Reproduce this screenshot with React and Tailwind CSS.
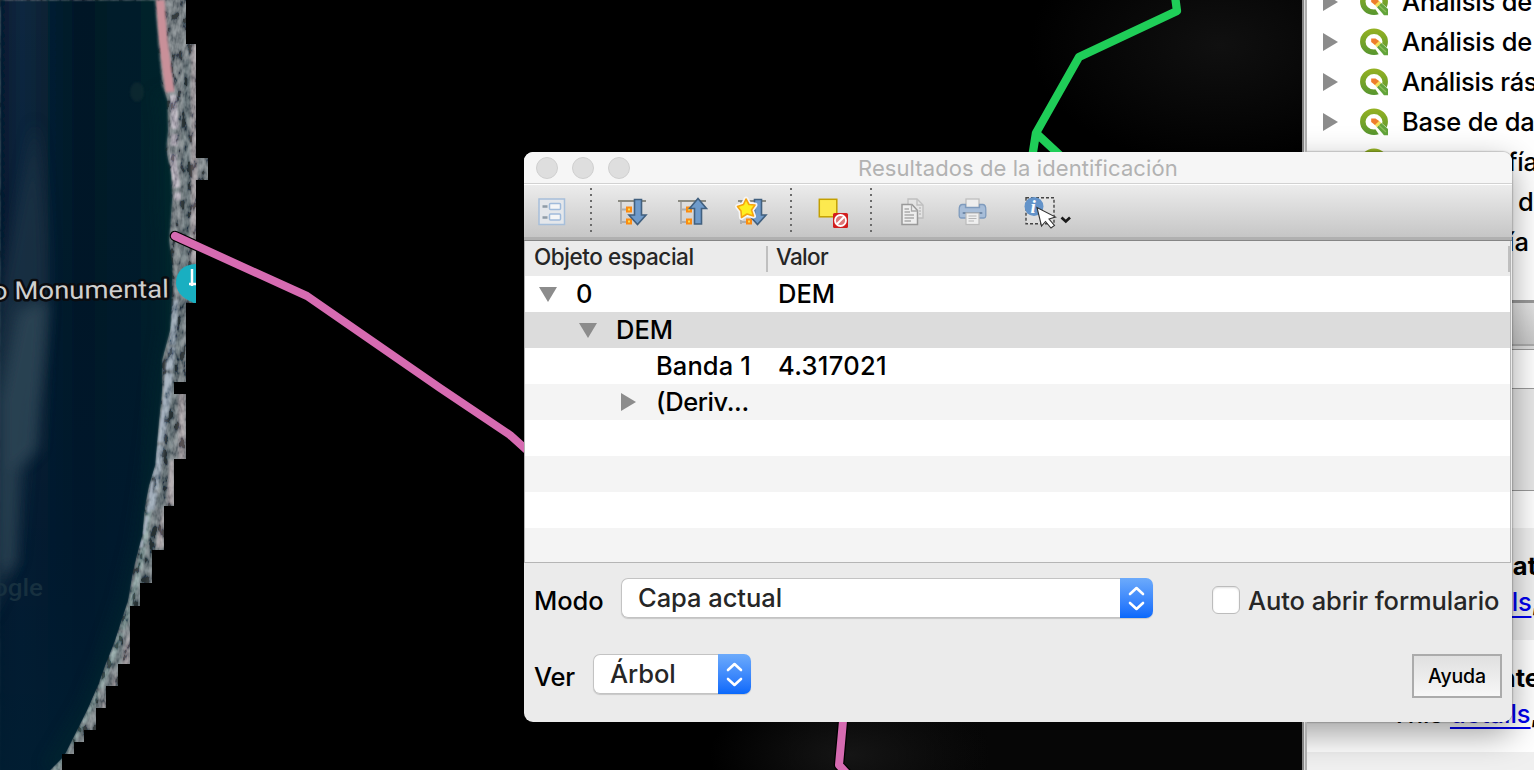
import React from "react";

const LAND =
  "M0 0H186V44H196V158H208V180H196V303H186V382H174V394H186V459H174V506H164V550H152V583H140V606H130V664H118V686H106V708H96V730H84V742H74V754H62V770H0Z";
const COAST =
  "M0 0H155L158 40L162 85L167 100L168 130L166 150L171 175L172 200L169 240L172 265L172 290L170 330L162 360L162 390L158 430L155 465L149 485L145 505L142 535L133 570L128 600L115 640L104 668L98 685L87 710L76 732L64 756L48 772H0Z";

function MapCanvas() {
  return (
    <svg className="block h-full w-full" viewBox="0 0 1302 770" preserveAspectRatio="none">
      <defs>
        <clipPath id="land"><path d={LAND} /></clipPath>
        <clipPath id="water"><path d={COAST} /></clipPath>
        <linearGradient id="sea" x1="0" x2="1" y1="0" y2="0">
          <stop offset="0" stopColor="#06192c" />
          <stop offset=".04" stopColor="#071e36" />
          <stop offset=".13" stopColor="#0a2940" />
          <stop offset=".3" stopColor="#061f31" />
          <stop offset=".45" stopColor="#001827" />
          <stop offset=".75" stopColor="#001d2a" />
          <stop offset="1" stopColor="#03262c" />
        </linearGradient>
        <linearGradient id="deep" x1="0" x2="0" y1="0" y2="1">
          <stop offset="0" stopColor="#001a2e" stopOpacity="0" />
          <stop offset=".4" stopColor="#00172c" stopOpacity=".35" />
          <stop offset=".7" stopColor="#00182e" stopOpacity=".75" />
          <stop offset="1" stopColor="#001d31" stopOpacity=".95" />
        </linearGradient>
        <radialGradient id="glow"><stop offset="0" stopColor="#101010" /><stop offset="1" stopColor="#101010" stopOpacity="0" /></radialGradient>
        <radialGradient id="glow2"><stop offset="0" stopColor="#151515" /><stop offset="1" stopColor="#151515" stopOpacity="0" /></radialGradient>
        <linearGradient id="floor" x1="0" x2="1" y1="0" y2="0"><stop stopColor="#060606" stopOpacity="0" /><stop offset=".4" stopColor="#060606" /></linearGradient>
        <filter id="rough" x="0" y="0" width="100%" height="100%">
          <feTurbulence type="fractalNoise" baseFrequency=".16 .08" numOctaves="3" seed="9" />
          <feColorMatrix values="2.4 0 0 0 -.82  2.4 0 0 0 -.8  2.4 0 0 0 -.77  0 0 0 0 1" />
        </filter>
        <filter id="b1" x="-50%" y="-10%" width="200%" height="120%"><feGaussianBlur stdDeviation="1.1" /></filter>
        <filter id="b8" x="-100%" y="-30%" width="300%" height="160%"><feGaussianBlur stdDeviation="7" /></filter>
      </defs>
      <rect width="1302" height="770" fill="#000" />
      <ellipse cx="1220" cy="45" rx="190" ry="120" fill="url(#glow)" />
      <rect x="780" y="720" width="522" height="50" fill="url(#floor)" />
      <ellipse cx="850" cy="755" rx="140" ry="70" fill="url(#glow2)" />
      <g clipPath="url(#land)">
        <rect width="210" height="770" fill="#566063" />
        <path d="M194 44V300M182 392V460M171 460V505M160 508V548M126 625V665M113 668V686M102 690V708" fill="none" stroke="#94888b" strokeWidth="7" opacity=".85" filter="url(#b1)" />
        <path d="M187 60L186 130L187 205L184 250L180 330L174 380L170 440L163 490L152 545L138 600L125 635L112 675L96 710" fill="none" stroke="#2f4347" strokeWidth="7" opacity=".6" filter="url(#b1)" />
        <path d="M173 95L175 130L173 160L178 200" fill="none" stroke="#a89eac" strokeWidth="7" strokeDasharray="34 5 12 8" filter="url(#b1)" />
        <path d="M175 202V240" fill="none" stroke="#3b5c69" strokeWidth="8" filter="url(#b1)" />
        <path d="M175 300L172 350L167 400L162 435L157 475L151 510" fill="none" stroke="#76899a" strokeWidth="7" strokeDasharray="45 2 23 3" filter="url(#b1)" />
        <path d="M149 510L144 545L137 580L128 612L118 642L107 670L94 700L80 728L67 750L54 772" fill="none" stroke="#64817f" strokeWidth="6" strokeDasharray="35 2 23 3" filter="url(#b1)" />
        <rect width="210" height="770" filter="url(#rough)" opacity=".38" />
        <path d="M160 0L163 40L170 92" fill="none" stroke="#c99099" strokeWidth="9" filter="url(#b1)" />
        <path d="M168 362L165 400L160 435L153 475L149 507L140 550" fill="none" stroke="#aab6c3" strokeWidth="3.500" strokeDasharray="8 4 18 6" filter="url(#b1)" />
        <path d={COAST} fill="url(#sea)" filter="url(#b1)" />
        <g clipPath="url(#water)">
          <rect width="200" height="770" fill="url(#deep)" />
          <path d="M35 120Q62 300 32 405L18 560L-10 620V340Z" fill="#20374a" opacity=".6" filter="url(#b8)" />
          <path d="M18 310L48 300L38 450L16 470L14 565L0 575V400Z" fill="#2f4757" opacity=".8" filter="url(#b8)" />
          <path d="M163 90L168 130L167 200L170 240L170 330L160 390L152 465L141 540L126 600L106 660L86 710L50 770" fill="none" stroke="#032b2e" strokeWidth="18" opacity=".4" filter="url(#b8)" />
          <ellipse cx="137" cy="92" rx="7" ry="10" fill="#143035" opacity=".5" filter="url(#b1)" />
          <text x="-7" y="596" fontSize="24" fontWeight="500" fill="#17303f" fontFamily="Roboto, sans-serif" textLength="50" lengthAdjust="spacingAndGlyphs">ogle</text>
        </g>
        <path d="M176 283C176 271 184 264 197 264V304C187 301 176 294 176 283Z" fill="#19afc1" />
        <path d="M192 269V286M189 284H197" fill="none" stroke="#fff" strokeWidth="2.500" />
      </g>
      <text x="-8" y="299.500" fontSize="25" fontWeight="400" fontFamily="Roboto, sans-serif" fill="#cfcfce" stroke="#0a0c10" strokeWidth="5" paintOrder="stroke" strokeLinejoin="round" textLength="177" lengthAdjust="spacingAndGlyphs" transform="rotate(-.7 0 299)">o Monumental</text>
      <g fill="none" strokeLinecap="round" strokeLinejoin="round">
        <path d="M175 236L307 296L440 388L510 435L540 462" stroke="#000" strokeWidth="10.500" />
        <path d="M175 236L307 296L440 388L510 435L540 462" stroke="#d66bb1" strokeWidth="8" />
        <path d="M844 710L839 765L850 777" stroke="#000" strokeWidth="10.500" />
        <path d="M844 710L839 765L850 777" stroke="#d66bb1" strokeWidth="8" />
      </g>
      <path d="M1175 -4L1177 11L1079 57L1036 133L1032 158M1036 133L1065 160" fill="none" stroke="#1fce58" strokeWidth="8.300" strokeLinejoin="round" />
    </svg>
  );
}

function QgisIcon() {
  return (
    <svg className="h-7 w-7 shrink-0" viewBox="0 0 28 28">
      <defs>
        <linearGradient id="qg" gradientUnits="userSpaceOnUse" x1="0" x2="0" y1="0" y2="28"><stop stopColor="#97b222" /><stop offset="1" stopColor="#559530" /></linearGradient>
      </defs>
      <ellipse cx="14" cy="13.800" rx="11.200" ry="10.500" fill="none" stroke="url(#qg)" strokeWidth="5.500" />
      <path d="M12 16L20.500 14L29 21.500V29H20.500Z" fill="#fff" />
      <path d="M16.800 19L21 14.800L28 21V27.300H24Z" fill="#63a43b" />
      <path d="M18.500 17L26 24" fill="none" stroke="#8cbf5a" strokeWidth="1.200" />
      <path d="M14.500 16.500L18.500 12.500L21.200 14.900L17 19.300Z" fill="#f5e05c" />
      <path d="M11.200 10.500H15.500L19 12.900L14.900 17L11.200 14Z" fill="#ee7d2b" />
    </svg>
  );
}

function RightArrow() {
  return <svg className="h-[18px] w-[15px] shrink-0" viewBox="0 0 15 18"><path d="M0 0L15 9L0 18Z" fill="#8c8c8c" /></svg>;
}
function DownArrow() {
  return <svg className="h-[15px] w-[18px] shrink-0" viewBox="0 0 18 15"><path d="M0 0H18L9 15Z" fill="#8c8c8c" /></svg>;
}

const TOOLS = ["Análisis de", "Análisis de", "Análisis rás", "Base de da", "Cartografía"];

function ToolRow({ label, className = "", labelClass = "tracking-[-0.2px]" }) {
  return (
    <div className={"flex h-10 shrink-0 items-center " + className}>
      <RightArrow />
      <span className="ml-[22px] flex"><QgisIcon /></span>
      <span className={"ml-[14px] whitespace-nowrap text-[25.500px] " + labelClass}>{label}</span>
    </div>
  );
}

function SidePanel() {
  return (
    <aside className="flex h-full w-[232px] shrink-0 overflow-hidden bg-white">
      <div className="h-full w-[5px] shrink-0 border-x-2 border-l-[#858585] border-r-[#adadad] bg-[#dadada]" />
      <div className="flex min-w-0 grow flex-col overflow-hidden">
        <div className="flex h-[300px] shrink-0 flex-col overflow-hidden pl-4">
          <ToolRow label={TOOLS[0]} className="-mt-[18px]" />
          <ToolRow label={TOOLS[1]} />
          <ToolRow label={TOOLS[2]} labelClass="tracking-[-0.35px]" />
          <ToolRow label={TOOLS[3]} />
          <ToolRow label={TOOLS[4]} labelClass="tracking-[-0.2px]" />
          <div className="flex h-10 shrink-0 items-center pl-[195px] text-[25.500px]">de</div>
          <div className="flex h-10 shrink-0 items-center pl-[185px] text-[25.500px]">ía</div>
        </div>
        <div className="h-[46px] shrink-0 border-b-2 border-t-[3px] border-b-[#aaa] border-t-[#999] bg-gradient-to-b from-[#e4e4e4] to-[#c8c8c8]" />
        <div className="h-[4px] shrink-0 border-b border-[#999] bg-[#ddd]" />
        <div className="h-[38px] shrink-0 bg-white" />
        <div className="h-[103px] shrink-0 border-y border-[#999] bg-[#e8e8e8]" />
        <div className="h-[37px] shrink-0 bg-white" />
        <div className="flex h-28 shrink-0 flex-col items-end overflow-hidden bg-[#f0f0f0] pt-5 text-[25.500px] leading-9">
          <b className="-mr-[3px] h-9 font-bold">at</b>
          <span className="-mr-[5px] h-9 whitespace-nowrap tracking-[-0.2px]"><u className="text-[#0000ee] decoration-[1.500px] underline-offset-[5px]">details</u>,</span>
        </div>
        <div className="flex h-28 shrink-0 flex-col overflow-hidden bg-white pt-5 text-[25.500px] leading-9">
          <b className="-mr-[6px] h-9 self-end font-bold">nte</b>
          <span className="ml-[84px] h-9 whitespace-nowrap">This <u className="text-[#0000ee] decoration-[1.500px] underline-offset-[4px]">details</u>,</span>
        </div>
        <div className="grow bg-[#f0f0f0]" />
      </div>
    </aside>
  );
}

function Dots() {
  return (
    <svg className="h-[46px] w-[2px]" viewBox="0 0 2 46">
      <path d="M1 0V45" stroke="#6b6b6b" strokeWidth="2" strokeDasharray="2 4" />
    </svg>
  );
}

function Tree() {
  return (
    <g>
      <path d="M1 3H29" stroke="#8b8b83" strokeWidth="2" />
      <path d="M4 4V26M4 11.500H9M4 24H9" stroke="#adadad" strokeWidth="2" fill="none" />
      <path d="M10 9.500H14V13.500H10ZM10 21.500H14V25.500H10Z" stroke="#fb8b12" strokeWidth="2" fill="#fde14d" />
    </g>
  );
}
const DOWN = "M17.500 1.500H24.500V17H29L20.500 26.500L12 17H17.500Z";
const STAR = "M9 1L12 6.500L18 7L14.500 12L16.500 18L10 16L4.500 19.500L4 13L.5 8.500L6.500 6.500Z";

function Icon({ children }) {
  return <svg className="h-8 w-8 overflow-visible" viewBox="0 0 32 32">{children}</svg>;
}

function Toolbar() {
  return (
    <div className="flex h-[53px] shrink-0 items-start border-t border-white bg-gradient-to-b from-[#ececec] to-[#c6c6c6] pt-[3px]">
      <div className="flex w-[66px] pl-[13px] pt-[10px]">
        <Icon>
          <rect x="2" y="1" width="25.500" height="25.500" fill="#e4e7eb" stroke="#a7bfda" strokeWidth="1.500" />
          <path d="M5.500 8.500H10.500M5.500 19.500H10.500" stroke="#8f9ca8" strokeWidth="2.500" />
          <rect x="12.500" y="5.500" width="11" height="6" rx="1" fill="#f5f6f7" stroke="#a0bbdb" strokeWidth="1.500" />
          <rect x="12.500" y="16" width="11" height="6" rx="1" fill="#f5f6f7" stroke="#a0bbdb" strokeWidth="1.500" />
        </Icon>
      </div>
      <Dots />
      <div className="flex gap-7 pl-[25px] pt-[10px]">
        <Icon><Tree /><path d={DOWN} fill="#6f9bcb" stroke="#41607f" strokeWidth="1.600" /></Icon>
        <Icon><Tree /><path d="M17.500 26V10.500H12.500L21 .5L29.500 10.500H24.500V26Z" fill="#6f9bcb" stroke="#41607f" strokeWidth="1.600" /></Icon>
        <Icon>
          <Tree />
          <path d={DOWN} fill="#6f9bcb" stroke="#41607f" strokeWidth="1.600" />
          <path d={STAR} fill="#fff" stroke="#f5f5f5" strokeWidth="5" strokeLinejoin="round" />
          <path d={STAR} fill="#ffef20" stroke="#f5a410" strokeWidth="1.600" strokeLinejoin="round" />
        </Icon>
      </div>
      <div className="ml-[21px] flex"><Dots /></div>
      <div className="flex w-[78px] pl-[26px] pt-[10px]">
        <Icon>
          <rect x="1.300" y="1.300" width="17.500" height="17.500" fill="#fce94f" stroke="#c4a000" strokeWidth="1.500" />
          <rect x="15" y="15" width="15" height="15" rx="1.500" fill="#d21d1d" />
          <circle cx="22.500" cy="22.500" r="5.500" fill="#d77" stroke="#fff" strokeWidth="1.800" />
          <path d="M18.800 26.200L26.200 18.800" stroke="#fff" strokeWidth="2" />
        </Icon>
      </div>
      <Dots />
      <div className="flex gap-[27px] pl-[28px] pt-[10px]">
        <Icon>
          <g fill="#e6e6e6" stroke="#b8b8b8" strokeWidth="1.400" opacity=".8"><path d="M8 1H17L23 7V20H8Z" /><path d="M17 1V7H23M19 10H21M19 13H21M19 16H21" fill="none" /></g>
          <path d="M2 6.500H12L17.500 12.500V26.500H2Z" fill="#eee" stroke="#999" strokeWidth="1.500" />
          <path d="M11.500 6.500V13H17.500M4.500 11H9M4.500 14H10M4.500 17H14M4.500 20H14M4.500 23H11" fill="none" stroke="#aaa" strokeWidth="1.300" />
        </Icon>
        <Icon>
          <rect x="7" y="1" width="13" height="10" fill="#eee" stroke="#bbb" strokeWidth="1.200" />
          <path d="M3 6.500H6.500V9.500H20.500V6.500H24Q27 7 26.800 12V18Q26.500 20 25 20H2Q.5 20 .2 18V12Q0 7 3 6.500Z" fill="#a7bdd8" stroke="#7f9bbd" strokeWidth="1.300" />
          <path d="M4.500 15H22.500" stroke="#7089a8" strokeWidth="2" strokeLinecap="round" />
          <rect x="7" y="15" width="13" height="11.500" fill="#efefef" stroke="#bbb" strokeWidth="1.200" />
          <path d="M9.500 18H17.500M9.500 20.500H17.500M9.500 23H15" stroke="#b5b5b5" />
        </Icon>
      </div>
      <div className="flex pl-[33px] pt-[9px]">
        <svg className="h-8 w-12" viewBox="0 0 48 32">
          <rect x="2" y=".8" width="28" height="26" fill="#e5e5e5" fillOpacity=".6" stroke="#444" strokeWidth="1.400" strokeDasharray="3 2" />
          <circle cx="10" cy="9.500" r="9.500" fill="#6393c9" />
          <text x="6.500" y="15.500" fontSize="19" fontWeight="700" fontStyle="italic" fill="#fff" fontFamily="Liberation Serif, serif">i</text>
          <path d="M13 10.500L17.500 29L21.500 24.500L27 31L30.500 28.500L25 22L31.500 20Z" fill="#fff" stroke="#333" strokeWidth="1.100" />
          <path d="M37.500 20.500L41.800 24.500L46 20.500" fill="none" stroke="#1a1a1a" strokeWidth="2.700" />
        </svg>
      </div>
    </div>
  );
}

function Stepper() {
  return (
    <span className="flex h-10 w-[33px] shrink-0 items-center justify-center rounded-r-[7px] bg-gradient-to-b from-[#6caafb] to-[#0768fb]">
      <svg className="h-7 w-5" viewBox="0 0 20 28"><path d="M3 10L9.500 4L16 10M3 19L9.500 25L16 19" fill="none" stroke="#fff" strokeWidth="2.600" strokeLinecap="round" strokeLinejoin="round" /></svg>
    </span>
  );
}

function Select({ label, className }) {
  return (
    <div className={"flex h-10 rounded-[7px] shadow-[0_1px_1px_rgba(0,0,0,0.15)] " + className}>
      <div className="flex grow items-center rounded-l-[7px] border border-r-0 border-[#c3c3c3] bg-white pl-4 text-[25.500px] tracking-[-0.050px] text-[#262626]">{label}</div>
      <Stepper />
    </div>
  );
}

function Dialog() {
  return (
    <section className="absolute left-[524px] top-[152px] flex h-[570px] w-[988px] flex-col overflow-hidden rounded-[9px] bg-[#ebebeb]">
      <header className="flex h-8 shrink-0 items-center border-b border-[#d2d2d2] bg-[#f6f6f6] pl-3 pt-px">
        <div className="flex gap-[14px]">
          <i className="h-[22px] w-[22px] rounded-full border border-[#cfcfcf] bg-[#dedede]" />
          <i className="h-[22px] w-[22px] rounded-full border border-[#cfcfcf] bg-[#dedede]" />
          <i className="h-[22px] w-[22px] rounded-full border border-[#cfcfcf] bg-[#dedede]" />
        </div>
        <h1 className="ml-[228px] whitespace-nowrap text-[22px] font-normal tracking-[0.080px] text-[#b2b2b2]">Resultados de la identificación</h1>
      </header>
      <Toolbar />
      <div className="h-[4px] shrink-0 border-b border-[#858585] bg-[#b0b0b0]" />
      <div className="mr-px flex h-[322px] shrink-0 flex-col border border-t-0 border-[#b5b5b5] bg-white text-[25.500px]">
        <div className="flex h-[35px] shrink-0 items-center bg-[#ebebeb] pl-[9px] text-[22.500px] text-[#262626]">
          <span className="w-[232px] pb-[3px] tracking-[-0.450px]">Objeto espacial</span>
          <span className="h-[26px] w-[2px] bg-[#bfbfbf]" />
          <span className="ml-2 grow pb-[3px] tracking-[-0.700px]">Valor</span>
          <span className="h-[26px] w-[2px] bg-[#bfbfbf]" />
        </div>
        <div className="flex h-9 shrink-0 items-center pl-[14px]"><DownArrow /><span className="ml-[19px] w-[202px]">0</span><span>DEM</span></div>
        <div className="flex h-9 shrink-0 items-center bg-[#dcdcdc] pl-[54px]"><DownArrow /><span className="ml-[19px]">DEM</span></div>
        <div className="flex h-9 shrink-0 items-center pl-[131px]"><span className="w-[122px] tracking-[0.100px]">Banda 1</span><span className="tracking-[0.300px]">4.317021</span></div>
        <div className="flex h-9 shrink-0 items-center bg-[#f4f4f4] pl-[96px]"><RightArrow /><span className="ml-5 tracking-[-0.400px]">(Deriv...</span></div>
        <div className="h-9 shrink-0" />
        <div className="h-9 shrink-0 bg-[#f4f4f4]" />
        <div className="h-9 shrink-0" />
        <div className="grow bg-[#f4f4f4]" />
      </div>
      <div className="mt-[15px] flex h-10 shrink-0 items-center pl-[10px] text-[25.500px]">
        <span className="mt-[6px] w-[87px] tracking-[-0.100px]">Modo</span>
        <Select label="Capa actual" className="w-[532px]" />
        <span className="ml-[59px] mt-1 h-7 w-7 shrink-0 rounded-[6px] border border-[#bcbcbc] bg-white shadow-[inset_0_1px_2px_rgba(0,0,0,0.12)]" />
        <span className="ml-2 mt-[6px] whitespace-nowrap tracking-[-0.080px] text-[#262626]">Auto abrir formulario</span>
      </div>
      <div className="mt-9 flex h-11 shrink-0 items-start pl-[10px] text-[25.500px]">
        <span className="mt-1 w-[59px] tracking-[-0.200px]">Ver</span>
        <Select label="Árbol" className="w-[158px]" />
        <button className="ml-auto mr-[10px] flex h-11 w-[90px] items-center justify-center border-2 border-[#ababab] bg-gradient-to-b from-[#e0e0e0] to-[#f7f7f7] pt-[2px] text-[19.500px] font-medium tracking-[-0.150px]">Ayuda</button>
      </div>
    </section>
  );
}

export default function App() {
  return (
    <main className="relative flex h-[770px] w-[1534px] overflow-hidden bg-black font-['Inter',sans-serif] font-[450] text-black">
      <div className="h-full w-[1302px] shrink-0"><MapCanvas /></div>
      <SidePanel />
      <div className="absolute left-[1307px] top-0 h-full w-[227px] overflow-hidden">
        <div className="absolute left-[-783px] top-[152px] h-[570px] w-[988px] rounded-[9px] shadow-[0_12px_34px_rgba(0,0,0,0.38),0_0_2px_rgba(0,0,0,0.6)]" />
      </div>
      <Dialog />
    </main>
  );
}
